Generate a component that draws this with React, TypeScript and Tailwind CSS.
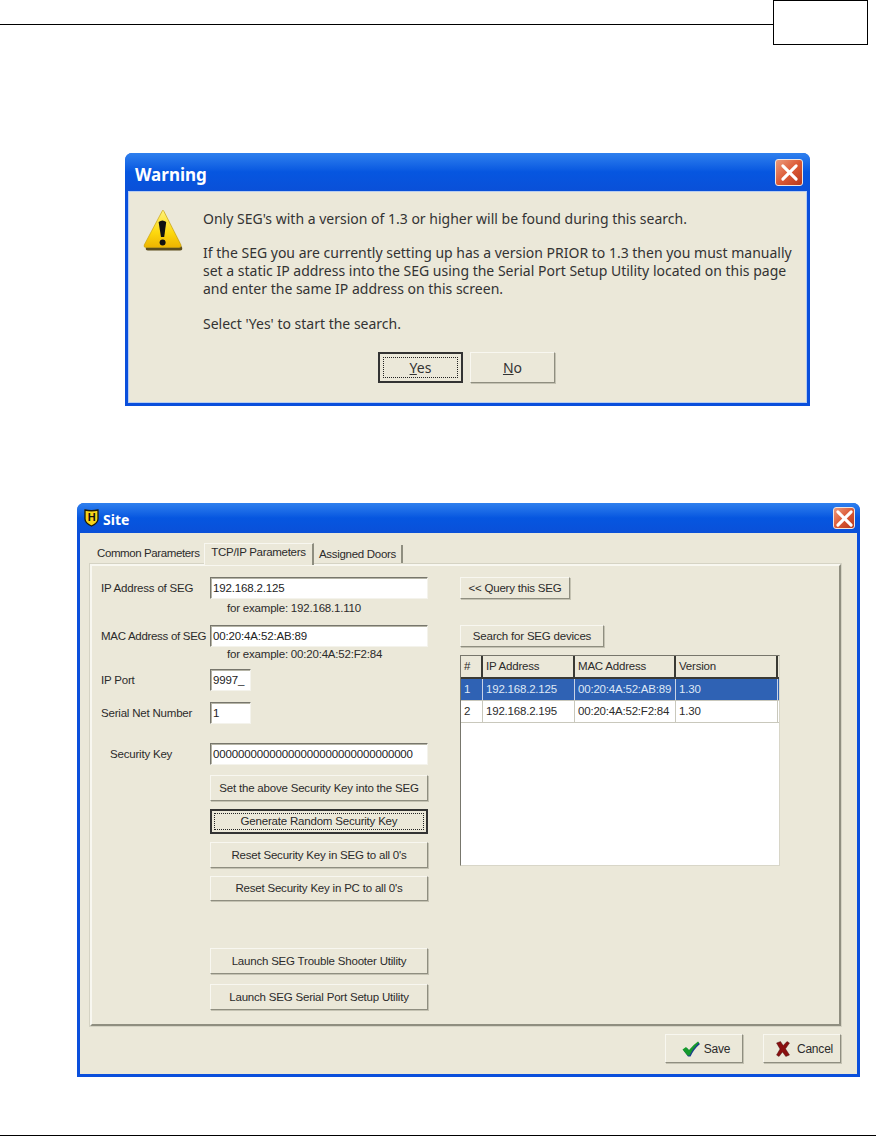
import type { ReactNode } from 'react';

const raised = 'bg-[#ebe8d9] border border-t-[#f8f7f0] border-l-[#f8f7f0] border-r-[#8f8e80] border-b-[#8f8e80] shadow-[1px_1px_0_#c4c2b2]';
const sunken = 'bg-white border border-t-[#77766c] border-l-[#77766c] border-r-[#f4f3ec] border-b-[#f4f3ec] shadow-[inset_1px_1px_0_#b5b4a6]';

function CloseButton({ className }: { className: string }) {
  return (
    <div className={`rounded-[3px] border border-[#f0e6e0] bg-gradient-to-br from-[#ea9a7c] via-[#dc5a36] to-[#b8381c] flex items-center justify-center ${className}`}>
      <svg viewBox="0 0 20 20" className="w-[19px] h-[19px]">
        <path d="M3 3 L17 17 M17 3 L3 17" stroke="white" strokeWidth="3.2" strokeLinecap="round" />
      </svg>
    </div>
  );
}

function WarningIcon() {
  return (
    <svg viewBox="0 0 40 42" className="w-[40px] h-[42px] shrink-0">
      <defs>
        <linearGradient id="warn" x1="0" y1="0" x2="0" y2="1">
          <stop offset="0" stopColor="#fff27a" />
          <stop offset="0.6" stopColor="#fdd80e" />
          <stop offset="1" stopColor="#eeb400" />
        </linearGradient>
      </defs>
      <path d="M20 2 L38 37 Q39 40 36 40 L4 40 Q1 40 2 37 Z" fill="#5c4d1c" transform="translate(1 1.4)" />
      <path d="M19.5 1.5 Q20.5 1 21 2.5 L38 36 Q38.5 38.5 36 38.5 L3 38.5 Q0.5 38.5 1.2 36 Z" fill="url(#warn)" stroke="#c9a412" strokeWidth="0.7" />
      <path d="M15.6 13 Q19.5 10 23.2 13 L21.2 28 L18 28 Z" fill="#111" />
      <circle cx="19.6" cy="33.4" r="3" fill="#111" />
    </svg>
  );
}

function ShieldIcon() {
  return (
    <svg viewBox="0 0 15 18" className="w-[15px] h-[18px] shrink-0">
      <path d="M1 1 Q7.5 2.5 14 1 V10 Q14 14 7.5 17 Q1 14 1 10 Z" fill="#f6d41a" stroke="#1e1b06" strokeWidth="1.3" />
      <text x="7.5" y="11.5" textAnchor="middle" fontSize="11" fontWeight="700" fill="#111" fontFamily="'Liberation Sans', sans-serif">H</text>
    </svg>
  );
}

function Btn({ children, className = '' }: { children: ReactNode; className?: string }) {
  return <div className={`${raised} flex items-center justify-center whitespace-nowrap pt-[1px] ${className}`}>{children}</div>;
}

function WideBtn({ children, className = '' }: { children: ReactNode; className?: string }) {
  return <Btn className={`w-[218px] ${className}`}>{children}</Btn>;
}

function Field({ value, className = '' }: { value: string; className?: string }) {
  return <div className={`${sunken} h-[22px] pl-[2px] pt-[1px] flex items-center text-[#222] tracking-[-0.15px] whitespace-nowrap ${className}`}>{value}</div>;
}

function Warning() {
  return (
    <section className="ml-[125px] mt-[108px] w-[685px] h-[253px] rounded-t-[7px] bg-[#0a4fdc] flex flex-col font-['Noto_Sans','Open_Sans',sans-serif]">
      <div className="h-[38px] shrink-0 rounded-t-[7px] bg-gradient-to-b from-[#2f80ee] via-[#0656e0] to-[#0a50d8] pl-[10px] pr-[7px] flex items-center justify-between">
        <span className="text-white font-bold text-[17px] leading-none pt-[5px]">Warning</span>
        <CloseButton className="w-[28px] h-[27px]" />
      </div>
      <div className="mx-[3px] mb-[3px] grow bg-[#ebe8d9] flex flex-col text-[#333] text-[14px] leading-[18px] border border-[#b8cdf0]">
        <div className="flex pl-[14px] pt-[17px]">
          <WarningIcon />
          <div className="ml-[20px] mt-[1px] whitespace-nowrap">
            <p>Only SEG's with a version of 1.3 or higher will be found during this search.</p>
            <p className="mt-[16px]">If the SEG you are currently setting up has a version PRIOR to 1.3 then you must manually</p>
            <p>set a static IP address into the SEG using the Serial Port Setup Utility located on this page</p>
            <p>and enter the same IP address on this screen.</p>
            <p className="mt-[17px]">Select 'Yes' to start the search.</p>
          </div>
        </div>
        <div className="flex justify-center gap-[7px] mt-[19px] pr-[2px]">
          <div className="w-[85px] h-[31px] bg-[#ebe8d9] border-2 border-[#333] p-[3px]">
            <div className="h-full border border-dotted border-[#222] flex items-center justify-center"><span><u>Y</u>es</span></div>
          </div>
          <Btn className="w-[85px] h-[31px]"><span><u>N</u>o</span></Btn>
        </div>
      </div>
    </section>
  );
}

function Site() {
  return (
    <section className="ml-[77px] mt-[97px] w-[783px] h-[574px] rounded-t-[7px] bg-[#0a4fdc] flex flex-col font-['Liberation_Sans',sans-serif] text-[11.5px] tracking-[-0.2px] text-[#2b2b2b]">
      <div className="h-[30px] shrink-0 rounded-t-[7px] bg-gradient-to-b from-[#2f80ee] via-[#0656e0] to-[#0a50d8] pl-[7px] pr-[5px] flex items-center justify-between">
        <div className="flex items-center gap-[4px]">
          <ShieldIcon />
          <span className="text-white font-bold text-[14px] tracking-normal font-['Noto_Sans',sans-serif] pt-[2px]">Site</span>
        </div>
        <CloseButton className="w-[22px] h-[22px]" />
      </div>
      <div className="mx-[3px] mb-[3px] grow bg-[#ebe8d9] flex flex-col pl-[10px] pr-[16px]">
        {/* tabs */}
        <div className="flex items-end h-[31px] shrink-0 tracking-[-0.3px]">
          <div className="h-[20px] w-[114px] pl-[7px] flex items-center tracking-[-0.4px] whitespace-nowrap">Common Parameters</div>
          <div className="h-[22px] w-[110px] flex items-center justify-center border-t border-l border-[#f8f7f0] border-r-2 border-r-[#8f8e80] -mb-px relative bg-[#ebe8d9] pb-[3px] whitespace-nowrap">TCP/IP Parameters</div>
          <div className="h-[19px] w-[89px] flex items-center justify-center border-r-2 border-[#8f8e80] whitespace-nowrap">Assigned Doors</div>
        </div>
        {/* panel */}
        <div className="h-[462px] border-2 border-t-[#f8f7f0] border-l-[#f8f7f0] border-r-[#8f8e80] border-b-[#8f8e80] outline outline-1 outline-[#d5d3c4] flex shrink-0">
          <div className="w-[368px] pl-[9px] pt-[11px] shrink-0">
            <div className="flex items-center h-[22px]">
              <span className="w-[109px] pt-[1px]">IP Address of SEG</span>
              <Field value="192.168.2.125" className="w-[218px]" />
            </div>
            <p className="ml-[126px] mt-[2px] h-[24px] leading-[14px]">for example: 192.168.1.110</p>
            <div className="flex items-center h-[22px]">
              <span className="w-[109px] pt-[1px] whitespace-nowrap tracking-[-0.3px]">MAC Address of SEG</span>
              <Field value="00:20:4A:52:AB:89" className="w-[218px]" />
            </div>
            <p className="ml-[126px] h-[22px] leading-[14px]">for example: 00:20:4A:52:F2:84</p>
            <div className="flex items-center h-[22px]">
              <span className="w-[109px] pt-[1px]">IP Port</span>
              <Field value="9997_" className="w-[41px]" />
            </div>
            <div className="flex items-center h-[22px] mt-[11px]">
              <span className="w-[109px] pt-[1px] whitespace-nowrap">Serial Net Number</span>
              <Field value="1" className="w-[41px]" />
            </div>
            <div className="flex items-center h-[22px] mt-[19px]">
              <span className="w-[109px] pl-[9px] pt-[1px]">Security Key</span>
              <Field value="00000000000000000000000000000000" className="w-[218px]" />
            </div>
            <div className="ml-[109px] mt-[10px] flex flex-col">
              <WideBtn className="h-[26px]">Set the above Security Key into the SEG</WideBtn>
              <div className="w-[218px] h-[25px] mt-[8px] bg-[#ebe8d9] border-2 border-[#333] p-[2px]">
                <div className="h-full border border-dotted border-[#222] flex items-center justify-center">Generate Random Security Key</div>
              </div>
              <WideBtn className="h-[26px] mt-[8px]">Reset Security Key in SEG to all 0's</WideBtn>
              <WideBtn className="h-[25px] mt-[8px]">Reset Security Key in PC to all 0's</WideBtn>
              <WideBtn className="h-[26px] mt-[47px]">Launch SEG Trouble Shooter Utility</WideBtn>
              <WideBtn className="h-[26px] mt-[10px]">Launch SEG Serial Port Setup Utility</WideBtn>
            </div>
          </div>
          <div className="pt-[11px] grow">
            <Btn className="w-[110px] h-[22px]">&lt;&lt; Query this SEG</Btn>
            <Btn className="w-[144px] h-[22px] mt-[26px]">Search for SEG devices</Btn>
            <div className="mt-[8px] w-[320px] h-[211px] bg-white border border-t-[#77766c] border-l-[#77766c] border-r-[#d8d6c8] border-b-[#d8d6c8]">
              <div className="grid grid-cols-[22px_92px_101px_102px] h-[23px] bg-[#ebe8d9] border-b-2 border-[#3a3a34]">
                {['#', 'IP Address', 'MAC Address', 'Version'].map((h) => (
                  <div key={h} className="pl-[3px] pt-[1px] flex items-center border-r-2 border-[#3a3a34]">{h}</div>
                ))}
              </div>
              <div className="grid grid-cols-[22px_92px_101px_102px] h-[22px] bg-[#2f62b4] text-[#dfe8f6] border-b border-[#c9c8bc]">
                {['1', '192.168.2.125', '00:20:4A:52:AB:89', '1.30'].map((c) => (
                  <div key={c} className="pl-[3px] flex items-center border-r border-[#c9d3e6] whitespace-nowrap">{c}</div>
                ))}
              </div>
              <div className="grid grid-cols-[22px_92px_101px_102px] h-[22px] border-b border-[#c9c8bc]">
                {['2', '192.168.2.195', '00:20:4A:52:F2:84', '1.30 '].map((c) => (
                  <div key={c} className="pl-[3px] flex items-center border-r border-[#c9c8bc] whitespace-nowrap">{c}</div>
                ))}
              </div>
            </div>
          </div>
        </div>
        {/* footer */}
        <div className="flex justify-end gap-[20px] mt-[8px] text-[12px]">
          <Btn className="w-[78px] h-[29px] gap-[4px] pl-[4px]">
            <svg viewBox="0 0 18 16" className="w-[18px] h-[16px]">
              <path d="M1.5 9.5 L5 7 L7.5 10 Q11 5 16.5 1.5 L18 3 Q12 8 8.5 15.5 L6 15.5 Z" fill="#1c3f8c" />
              <path d="M0.5 8.5 L4 6 L7 9 Q11 4 16 0.5 L17 1.5 Q11 7 7.5 14.5 L5.5 14.5 Z" fill="#169a2c" />
            </svg>
            Save
          </Btn>
          <Btn className="w-[78px] h-[29px] gap-[7px] pl-[5px]">
            <svg viewBox="0 0 14 16" className="w-[14px] h-[16px]">
              <path d="M0.5 2 L4.5 0.5 L7.2 4.5 L11 0.5 L13.5 2 L9.5 7.8 L13.5 14 L9.8 15.5 L6.5 11 L3 15.5 L0.5 14 L4 8 Z" fill="#8a1010" stroke="#3c0a0a" strokeWidth="0.4" />
            </svg>
            Cancel
          </Btn>
        </div>
      </div>
    </section>
  );
}

export default function App() {
  return (
    <div className="relative w-[876px] h-[1137px] bg-white overflow-hidden flex flex-col">
      <header className="flex items-start h-[45px] shrink-0">
        <div className="grow h-[25px] border-b border-black" />
        <div className="w-[95px] h-[45px] border border-black mr-[8px]" />
      </header>
      <Warning />
      <Site />
      <div className="mt-auto mb-[1px] h-px bg-black" />
    </div>
  );
}
